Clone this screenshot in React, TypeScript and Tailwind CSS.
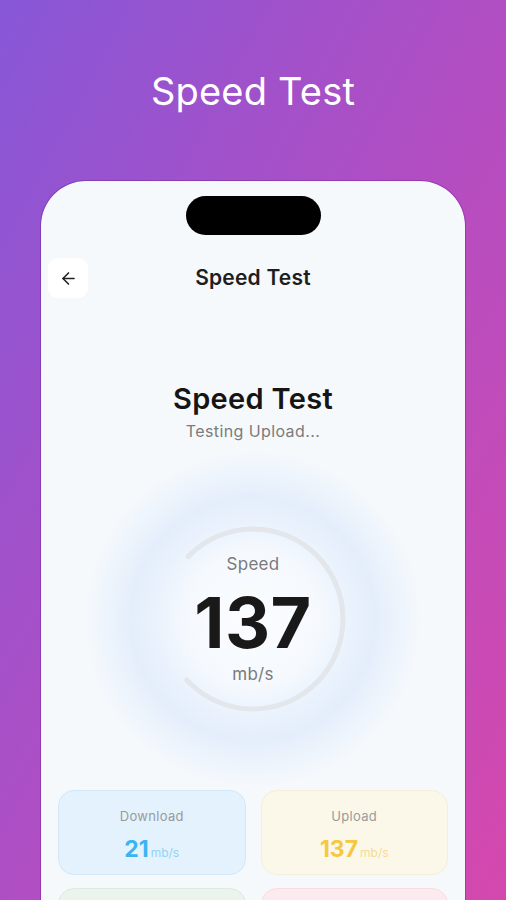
import React from 'react';
import { ArrowLeft } from 'lucide-react';

const font = { fontFamily: 'Inter, "Noto Sans", sans-serif' };

const stats = [
  { label: 'Download', value: '21', box: 'bg-[#e3f2fd] border-[#d2e8f8]', num: 'text-[#3cb4f1]', unit: 'text-[#95d2f3]' },
  { label: 'Upload', value: '137', box: 'bg-[#fbf8ea] border-[#f4efdb]', num: 'text-[#f6c83e]', unit: 'text-[#f6dc92]' },
  { label: 'Ping', value: '12', box: 'bg-[#eaf3ec] border-[#dcebe0]', num: 'text-[#4cc07a]', unit: 'text-[#a2dcb9]' },
  { label: 'Jitter', value: '4', box: 'bg-[#fcebee] border-[#f8dce2]', num: 'text-[#f0607a]', unit: 'text-[#f4a9b6]' },
];

// gauge ring with a gap on the left side
const Gauge: React.FC = () => {
  const r = 90;
  const c = 2 * Math.PI * r;
  const arc = c * (273 / 360);
  return (
    <svg width="190" height="190" viewBox="0 0 190 190" className="absolute inset-0 m-auto">
      <circle
        cx="95"
        cy="95"
        r={r}
        fill="none"
        stroke="#e3e6ea"
        strokeWidth="5"
        strokeLinecap="round"
        strokeDasharray={`${arc} ${c}`}
        transform="rotate(-136 95 95)"
      />
    </svg>
  );
};

const App: React.FC = () => {
  return (
    <div
      className="w-full h-[900px] overflow-hidden flex flex-col items-center bg-[linear-gradient(118deg,#8757d7_0%,#b04ec3_50%,#d548ae_100%)]"
      style={font}
    >
      {/* Page title */}
      <h1 className="mt-[68px] text-[38px] leading-[46px] font-normal text-white tracking-[0.2px]">Speed Test</h1>

      {/* Phone */}
      <div className="mt-[66px] w-[426px] shrink-0 pb-[60px] rounded-t-[46px] bg-[#f6f9fc] bg-clip-padding border border-[#5a0a90]/30 flex flex-col items-center">
        {/* Notch */}
        <div className="mt-[15px] w-[135px] h-[39px] shrink-0 rounded-full bg-black" />

        {/* Header */}
        <div className="mt-[23px] w-full px-[7px] flex items-center">
          <button className="w-[40px] h-[40px] rounded-[10px] bg-white flex items-center justify-center">
            <ArrowLeft className="w-[19px] h-[19px] text-[#222]" strokeWidth={2} />
          </button>
          <div className="flex-1 text-center text-[21px] font-semibold text-[#1e1e1e] tracking-[0.2px]">Speed Test</div>
          <div className="w-[40px]" />
        </div>

        {/* Status */}
        <div className="mt-[84px] text-[29px] leading-[34px] font-semibold text-[#151515] tracking-[0.3px]">Speed Test</div>
        <div className="mt-[5px] text-[16px] leading-[20px] text-[#7b7b7b] tracking-[0.4px]">Testing Upload...</div>

        {/* Gauge */}
        <div className="mt-[8px] relative w-[340px] h-[340px] shrink-0 rounded-full bg-[radial-gradient(circle_closest-side,#fbfdff_0%,#f5f9fe_40%,#e8f1fc_60%,#e4eefb_72%,#edf4fc_86%,#f6f9fc_100%)]">
          <Gauge />
          <div className="absolute inset-0 flex flex-col items-center justify-center">
            <div className="text-[17px] leading-[20px] text-[#7a7a7a] tracking-[0.3px]">Speed</div>
            <div className="mt-[14px] text-[70px] leading-[70px] font-bold text-[#191919] tracking-[0.5px]">137</div>
            <div className="mt-[6px] text-[17px] leading-[20px] text-[#7a7a7a] tracking-[0.3px]">mb/s</div>
          </div>
        </div>

        {/* Stat cards */}
        <div className="mt-[1px] w-full px-[17px] grid grid-cols-2 gap-x-[15px] gap-y-[13px]">
          {stats.map((s) => (
            <div key={s.label} className={`h-[85px] rounded-[16px] border flex flex-col items-center ${s.box}`}>
              <div className="mt-[17px] text-[13px] leading-[16px] text-[#9a9a9a] tracking-[0.3px]">{s.label}</div>
              <div className="mt-[12px] flex items-baseline">
                <span className={`text-[23px] leading-[26px] font-bold ${s.num}`}>{s.value}</span>
                <span className={`ml-[2px] text-[12px] ${s.unit}`}>mb/s</span>
              </div>
            </div>
          ))}
        </div>
      </div>
    </div>
  );
};

export default App;
